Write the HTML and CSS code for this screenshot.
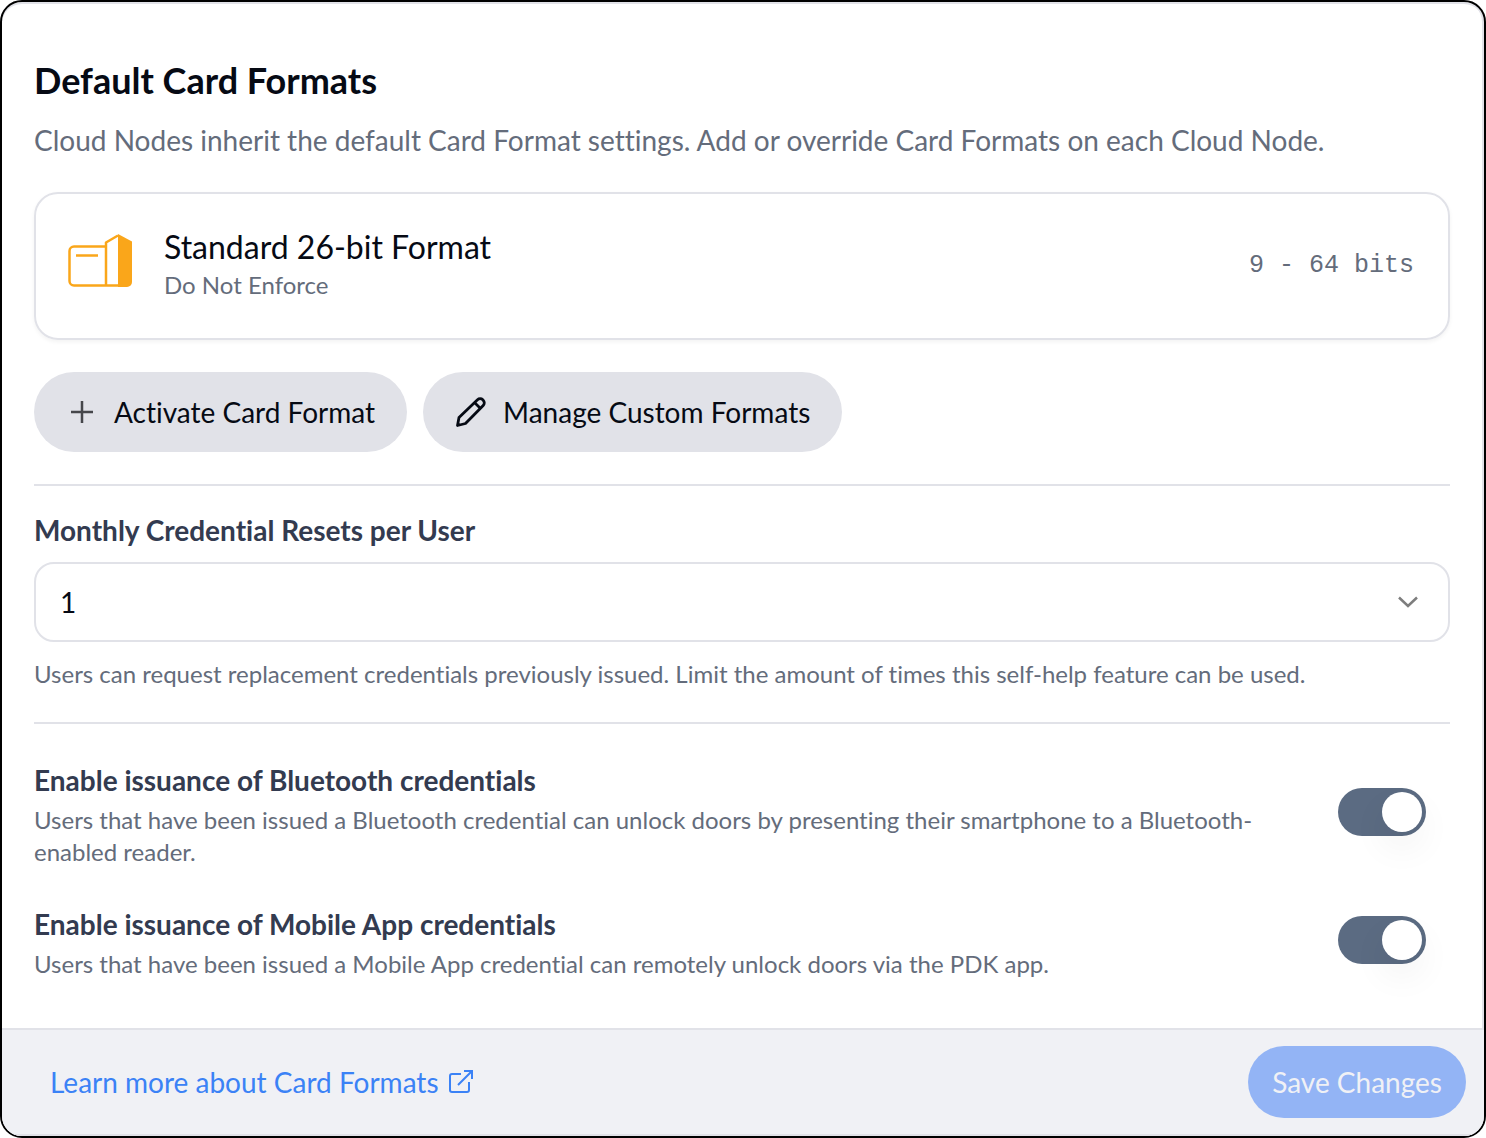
FILE: index.html
```html
<!DOCTYPE html>
<html lang="en">
<head>
    <meta charset="UTF-8">
    <meta name="viewport" content="width=device-width, initial-scale=1.0">
    <title>Default Card Formats</title>
    <link rel="stylesheet" href="styles.css">
</head>
<body>
    <form class="panel">
        <main class="panel-body">
            <h1 class="title">Default Card Formats</h1>
            <p class="subtitle">Cloud Nodes inherit the default Card Format settings. Add or override Card Formats on each Cloud Node.</p>

            <div class="format-card">
                <svg class="format-icon" viewBox="0 0 64 64" fill="none" stroke="currentColor" stroke-width="2.5" stroke-linejoin="round" aria-hidden="true">
                    <path d="M37 12.500H6a4.500 4.500 0 0 0-4.500 4.500v30a4.500 4.500 0 0 0 4.500 4.500h53"></path>
                    <path d="M38 51V8.500L50 1.500"></path>
                    <path d="M8 21.500h22"></path>
                    <path d="M50 0l14 7.500V48a5 5 0 0 1-5 5H50z" fill="currentColor" stroke="none"></path>
                </svg>
                <div class="format-text">
                    <h2 class="format-name">Standard 26-bit Format</h2>
                    <p class="format-note">Do Not Enforce</p>
                </div>
                <span class="format-bits">9 - 64 bits</span>
            </div>

            <div class="actions">
                <button type="button" class="btn">
                    <svg class="btn-icon plus" viewBox="0 0 32 32" fill="none" stroke="currentColor" stroke-width="2.5" aria-hidden="true">
                        <path d="M16 5v22M5 16h22"></path>
                    </svg>
                    Activate Card Format
                </button>
                <button type="button" class="btn">
                    <svg class="btn-icon" viewBox="0 0 32 32" fill="none" stroke="currentColor" stroke-width="2.8" stroke-linecap="round" stroke-linejoin="round" aria-hidden="true">
                        <path d="M2.500 29.500l1.500-8L22.500 3.800a3.800 3.800 0 0 1 5.300 0l.4.4a3.800 3.800 0 0 1 0 5.300L10.500 27.500z"></path>
                        <path d="M20 7l5 5"></path>
                        <path d="M3 26l3 3-4 1z" fill="currentColor" stroke="none"></path>
                    </svg>
                    Manage Custom Formats
                </button>
            </div>

            <hr class="divider">

            <label class="field-label" for="resets">Monthly Credential Resets per User</label>
            <div class="select-wrap">
                <select class="select" id="resets" aria-describedby="resets-help">
                    <option>1</option>
                    <option>2</option>
                    <option>3</option>
                </select>
                <svg class="chevron" viewBox="0 0 24 24" fill="none" stroke="currentColor" stroke-width="2.5" aria-hidden="true">
                    <path d="M3 7.500l9 8.500 9-8.500"></path>
                </svg>
            </div>
            <p class="help" id="resets-help">Users can request replacement credentials previously issued. Limit the amount of times this self-help feature can be used.</p>

            <hr class="divider">

            <div class="setting">
                <div class="setting-text">
                    <label class="setting-label" for="bluetooth">Enable issuance of Bluetooth credentials</label>
                    <p class="setting-note">Users that have been issued a Bluetooth credential can unlock doors by presenting their smartphone to a Bluetooth-enabled reader.</p>
                </div>
                <input type="checkbox" role="switch" class="toggle" id="bluetooth" checked>
            </div>
            <div class="setting">
                <div class="setting-text">
                    <label class="setting-label" for="mobile">Enable issuance of Mobile App credentials</label>
                    <p class="setting-note">Users that have been issued a Mobile App credential can remotely unlock doors via the PDK app.</p>
                </div>
                <input type="checkbox" role="switch" class="toggle" id="mobile" checked>
            </div>
        </main>

        <footer class="footer">
            <a class="learn-more" href="#">
                Learn more about Card Formats
                <svg class="link-icon" viewBox="0 0 24 24" fill="none" stroke="currentColor" stroke-width="2" aria-hidden="true">
                    <path d="M12 4H3a2 2 0 0 0-2 2v14a2 2 0 0 0 2 2h15a2 2 0 0 0 2-2v-8"></path>
                    <path d="M15 1h8v8M23 1L9 15"></path>
                </svg>
            </a>
            <button type="submit" class="save" disabled>Save Changes</button>
        </footer>
    </form>
</body>
</html>
```
FILE: styles.css
```css
:root {
    --color-text: #060a14;
    --color-heading: #333b50;
    --color-muted: #646c7b;
    --color-border: #e1e2e8;
    --color-link: #3b82f6;
    --color-toggle: #5b6b82;
}

* {
    box-sizing: border-box;
}

body {
    margin: 0;
    background: #ffffff;
    color: var(--color-text);
    font-family: Lato, "Liberation Sans", sans-serif;
    font-size: 28px;
    line-height: 40px;
    font-variant-ligatures: none;
}

h1, h2, p {
    margin: 0;
    font-weight: 400;
}

.panel {
    display: flex;
    flex-direction: column;
    min-height: 100vh;
    border: 2px solid #000000;
    border-radius: 22px;
    box-shadow: inset -2px 0 var(--color-border), inset 0 2px var(--color-border);
    overflow: hidden;
}

.panel-body {
    flex: 1;
    padding: 54px 34px 48px 32px;
}

.title {
    font-size: 36px;
    font-weight: 700;
    line-height: 48px;
}

.subtitle {
    margin: 16px 0 32px;
    color: var(--color-muted);
}

/* Card format */
.format-card {
    display: flex;
    align-items: center;
    gap: 32px;
    padding: 31px 34px 31px 32px;
    border: 2px solid var(--color-border);
    border-radius: 24px;
    box-shadow: 0 2px 4px rgba(0, 0, 0, 0.05);
}

.format-icon {
    flex: none;
    width: 64px;
    height: 64px;
    color: #faa61a;
}

.format-text {
    flex: 1;
    padding-bottom: 6px;
}

.format-name {
    font-size: 32px;
    line-height: 44px;
}

.format-note {
    font-size: 24px;
    line-height: 32px;
    color: var(--color-muted);
}

.format-bits {
    font-family: "Liberation Mono", monospace;
    font-size: 25px;
    color: var(--color-muted);
}

/* Buttons */
.actions {
    display: flex;
    flex-wrap: wrap;
    gap: 16px;
    margin: 32px 0;
}

.btn {
    display: flex;
    align-items: center;
    gap: 16px;
    padding: 20px 32px;
    border: none;
    border-radius: 40px;
    background: var(--color-border);
    color: var(--color-text);
    font: inherit;
    font-variant-ligatures: none;
    cursor: pointer;
}

.btn-icon {
    width: 32px;
    height: 32px;
}

.plus {
    color: #45464a;
}

.divider {
    height: 2px;
    margin: 32px 0;
    border: none;
    background: var(--color-border);
}

/* Select */
.field-label {
    display: block;
    margin: -8px 0 12px;
    color: var(--color-heading);
    font-weight: 700;
}

.select-wrap {
    position: relative;
}

.select {
    display: block;
    width: 100%;
    height: 80px;
    padding: 0 24px;
    border: 2px solid var(--color-border);
    border-radius: 20px;
    background: #ffffff;
    color: var(--color-text);
    font: inherit;
    appearance: none;
}

.chevron {
    position: absolute;
    top: 28px;
    right: 30px;
    width: 24px;
    height: 24px;
    color: #7d7d7d;
    pointer-events: none;
}

.help {
    margin-top: 16px;
    font-size: 24px;
    line-height: 32px;
    color: var(--color-muted);
}

/* Settings */
.setting {
    display: flex;
    align-items: center;
    justify-content: space-between;
    gap: 80px;
    padding-right: 24px;
}

.setting + .setting {
    margin-top: 32px;
}

.setting-label {
    display: block;
    line-height: 48px;
    color: var(--color-heading);
    font-weight: 700;
}

.setting-note {
    font-size: 24px;
    line-height: 32px;
    color: var(--color-muted);
}

.toggle {
    flex: none;
    display: flex;
    justify-content: flex-end;
    width: 88px;
    height: 48px;
    margin: 0;
    padding: 4px;
    border-radius: 24px;
    background: var(--color-toggle);
    appearance: none;
    cursor: pointer;
}

.toggle::before {
    content: "";
    width: 40px;
    height: 40px;
    border-radius: 50%;
    background: #ffffff;
    box-shadow: 0 16px 36px rgba(0, 0, 0, 0.06);
}

.toggle:not(:checked) {
    justify-content: flex-start;
    background: var(--color-border);
}

/* Footer */
.footer {
    display: flex;
    align-items: center;
    justify-content: space-between;
    padding: 16px 18px 16px 48px;
    border-top: 2px solid var(--color-border);
    border-bottom: 2px solid var(--color-border);
    background: #f0f1f5;
}

.learn-more {
    display: flex;
    align-items: center;
    gap: 10px;
    color: var(--color-link);
    text-decoration: none;
}

.link-icon {
    width: 24px;
    height: 24px;
}

.save {
    padding: 16px 24px;
    border: none;
    border-radius: 36px;
    background: #93b4f5;
    color: #f0f1f5;
    font: inherit;
}
```
